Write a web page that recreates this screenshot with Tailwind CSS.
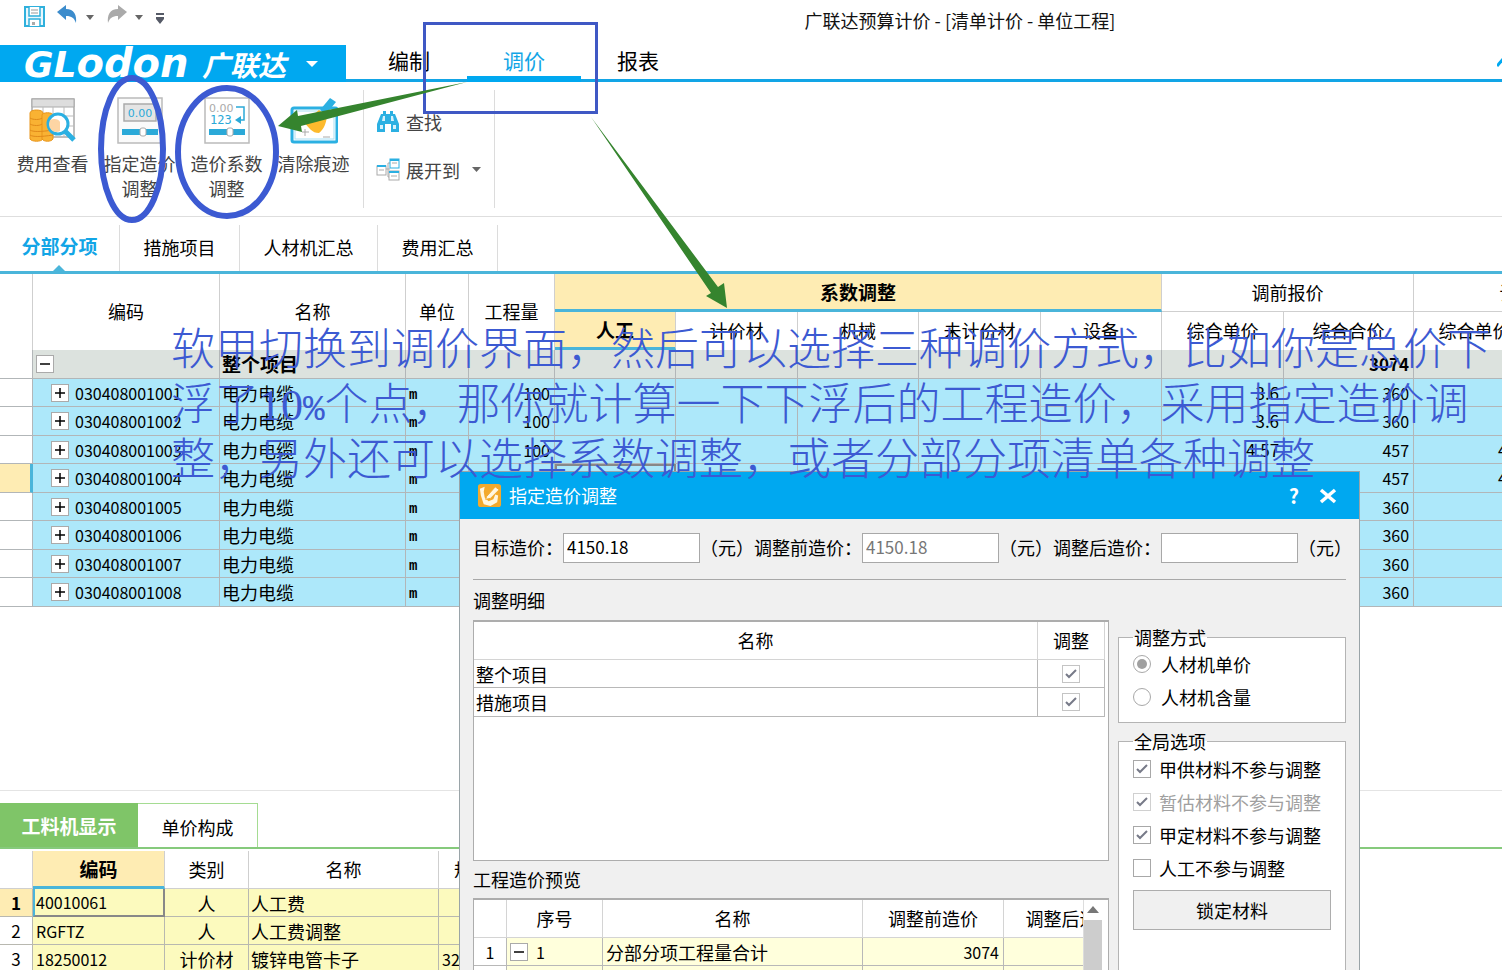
<!DOCTYPE html>
<html lang="zh-CN">
<head>
<meta charset="utf-8">
<title>广联达预算计价</title>
<script src="https://cdn.jsdelivr.net/npm/@tailwindcss/browser@4"></script>
</head>
<body class="bg-white">
<div class="relative flex h-screen w-full flex-col overflow-hidden bg-white font-['Noto_Sans_CJK_SC',sans-serif] text-[18px] leading-6 text-black">

  <!-- Title bar -->
  <header class="grid h-[45px] shrink-0 grid-cols-[1fr_auto_1fr] items-start">
    <div class="flex items-center pt-1 pl-6">
      <button aria-label="保存" class="mr-2.5"><svg class="block" width="22" height="24" viewBox="0 0 22 24"><rect x="1" y="3" width="19" height="19" fill="#e8f7fd" stroke="#2fb0dc" stroke-width="2"/><path d="M5 3v9h11V3M5 22v-7h11v7" fill="#fff" stroke="#2fb0dc" stroke-width="1.5"/><path d="M7 6h7M7 9h7" stroke="#999"/><path d="M8 18h3v3H8z" fill="#aaa"/></svg></button>
      <button aria-label="撤销"><svg class="block" width="22" height="24" viewBox="0 0 22 24"><path d="M1 8 10 1v4c8 0 11 6 10 14-2-5-4-7-10-7v4z" fill="#3c8ccc"/></svg></button>
      <button aria-label="撤销列表" class="mr-3 ml-2"><svg class="block" width="9" height="24" viewBox="0 0 9 24"><path d="M0 11h8l-4 5z" fill="#666"/></svg></button>
      <button aria-label="恢复"><svg class="block" width="22" height="24" viewBox="0 0 22 24"><path d="M20 8 11 1v4C3 5 0 11 1 19c2-5 4-7 10-7v4z" fill="#aaa"/></svg></button>
      <button aria-label="恢复列表" class="mr-3 ml-1.5"><svg class="block" width="9" height="24" viewBox="0 0 9 24"><path d="M0 11h8l-4 5z" fill="#666"/></svg></button>
      <button aria-label="自定义"><svg class="block" width="9" height="24" viewBox="0 0 9 24"><path d="M0 9h8v2H0zM0 13h8v2l-4 5-4-5z" fill="#555a66"/></svg></button>
    </div>
    <h1 class="pt-2 pl-[418px] font-normal whitespace-nowrap text-[#111]">广联达预算计价 - [清单计价 - 单位工程]</h1>
    <div></div>
  </header>

  <!-- Main tabs -->
  <nav class="flex h-[37px] shrink-0 border-b-3 border-[#12a5e6]">
    <button class="-mb-[3px] flex w-[346px] shrink-0 items-center bg-[#00a8f0] pl-6 text-white">
      <span class="flex w-[178px] items-baseline font-['DejaVu_Sans',sans-serif] text-[36px] leading-9 font-bold italic">GL<span class="text-[40px]">odon</span></span>
      <span class="text-[28px] leading-9 font-bold italic">广联达</span>
      <svg class="ml-5" width="12" height="8" viewBox="0 0 12 8"><path d="M0 1h12L6 7z" fill="#fff"/></svg>
    </button>
    <a href="#" class="ml-1.5 flex w-[114px] items-center justify-center pb-1 text-[21px]">编制</a>
    <a href="#" class="-mb-[3px] ml-px flex w-[114px] items-center justify-center border-b-6 border-[#00a8f0] pb-0.5 text-[21px] text-[#12a5e6]">调价</a>
    <a href="#" class="flex w-[114px] items-center justify-center pb-1 text-[21px]">报表</a>
    <svg class="ml-auto self-center" width="5" height="10" viewBox="0 0 5 10"><path d="M0 9 7 1" stroke="#00a8f0" stroke-width="3"/></svg>
  </nav>

  <!-- Ribbon -->
  <section class="flex h-[135px] shrink-0 border-b border-[#dedede] pl-[9px] text-[#444]">
    <button class="flex w-[87px] flex-col items-center pt-[14px]">
      <svg width="48" height="48" viewBox="0 0 48 48"><path d="M3 3h42v38H3z" fill="#fff" stroke="#aaa" stroke-width="1.5"/><path d="M3 3h42v8H3z" fill="#ddd" stroke="#aaa"/><path d="M14 11v30M24 11v30M35 11v30M3 20h42M3 30h42" stroke="#bbb"/><path d="M1 17c0-4 13-4 13 0v26c-2 3-11 3-13 0z" fill="#f9b233" stroke="#e8951b"/><path d="M13 19c0-3 11-3 11 0v24c-2 3-9 3-11 0z" fill="#f9b233" stroke="#e8951b"/><path d="M1 22c3 2 10 2 12 0M1 28c3 2 10 2 12 0M1 34c3 2 10 2 23 0M1 39c3 2 10 2 23 0" fill="none" stroke="#e08a1a"/><circle cx="29" cy="28" r="10" fill="#fff" stroke="#2bb0e2" stroke-width="3"/><path d="M21 24c4-2 9-1 10 2v9c-5 3-11-1-11-7z" fill="#fdd5a4"/><path d="m36 35 9 9" stroke="#2bb0e2" stroke-width="5"/></svg>
      <span class="mt-[7px] leading-[25px]">费用查看</span>
    </button>
    <button class="flex w-[87px] flex-col items-center pt-[14px]">
      <svg width="48" height="48" viewBox="0 0 48 48"><path d="M2 2h44v45H2z" fill="#fafafa" stroke="#bbb" stroke-width="1.5"/><path d="M8 8h32v17H8z" fill="#e4e4e4" stroke="#aaa" stroke-width="1.5"/><text x="24" y="21" text-anchor="middle" font-family="DejaVu Sans" font-size="11" fill="#2ba9d8">0.00</text><path d="M6 33h36v6H6z" fill="#2ba9d8"/><rect x="24" y="32" width="6" height="8" rx="2" fill="#fff" stroke="#aaa"/></svg>
      <span class="mt-[7px] leading-[25px] whitespace-nowrap">指定造价<br>调整</span>
    </button>
    <button class="flex w-[87px] flex-col items-center pt-[14px]">
      <svg width="48" height="48" viewBox="0 0 48 48"><path d="M2 2h44v45H2z" fill="#fff" stroke="#bbb" stroke-width="1.5"/><text x="6" y="16" font-family="DejaVu Sans" font-size="11" fill="#aaa">0.00</text><text x="7" y="28" font-family="DejaVu Sans Mono" font-size="12" fill="#2ba9d8">123</text><path d="M33 11h8v13h-5" fill="none" stroke="#2ba9d8" stroke-width="1.5"/><path d="m32 24 6-4v8z" fill="#2ba9d8"/><path d="M6 33h36v6H6z" fill="#2ba9d8"/><rect x="24" y="32" width="6" height="8" rx="2" fill="#fff" stroke="#aaa"/></svg>
      <span class="mt-[7px] leading-[25px] whitespace-nowrap">造价系数<br>调整</span>
    </button>
    <button class="flex w-[87px] flex-col items-center pt-[14px]">
      <svg width="48" height="48" viewBox="0 0 48 48"><rect x="2" y="12" width="45" height="34" rx="2" fill="#fff" stroke="#2bb0e2" stroke-width="3"/><rect x="5" y="15" width="39" height="28" fill="none" stroke="#a9e0f5"/><path d="m14 26 15-12 8 6c-1 8-3 13-8 17-7 0-10-5-15-11z" fill="#fdba2d"/><path d="m30 14 10-12 6 4-10 12z" fill="#2bb0e2"/><path d="M12 36h7M15 33v7M33 41h7" stroke="#aaa"/></svg>
      <span class="mt-[7px] leading-[25px]">清除痕迹</span>
    </button>
    <div class="my-2 ml-1.5 flex w-[132px] flex-col gap-6 border-x border-[#dcdcdc] pt-5 pl-3">
      <button class="flex items-center gap-1.5">
        <svg width="24" height="24" viewBox="0 0 24 24"><path d="M7 1h3v3h4V1h3v3h2l4 10v8h-8v-8h-6v8H1v-8L5 4h2z" fill="#2bb0e2"/><path d="M4 15h3v4H4zM17 15h3v4h-3zM7 6h2v5H6zM15 6h2l1 5h-3z" fill="#d6f1fb"/></svg>
        <span>查找</span>
      </button>
      <button class="flex items-center gap-1.5">
        <svg width="24" height="24" viewBox="0 0 24 24" fill="#fff"><path d="M10 11h4M14 5h-2v14h2" fill="none" stroke="#aaa"/><rect x="1" y="8" width="9" height="9" stroke="#aaa"/><path d="M1 8h9" stroke="#2bb0e2" stroke-width="2"/><rect x="14" y="1" width="9" height="9" stroke="#2bb0e2"/><rect x="13" y="13" width="10" height="9" stroke="#aaa"/><path d="M14 2h9M13 14h10" stroke="#2bb0e2" stroke-width="2"/><path d="M3 12h5M16 5h5M15 18h6" stroke="#aaa"/></svg>
        <span>展开到</span>
        <svg class="ml-1.5" width="9" height="6" viewBox="0 0 9 6"><path d="M0 0h9L4.5 5z" fill="#666"/></svg>
      </button>
    </div>
  </section>

  <!-- Sub tabs -->
  <nav class="flex h-[57px] shrink-0 items-stretch border-b-3 border-[#4ab5da] pt-2">
    <a href="#" class="relative flex w-[120px] items-center justify-center border-r border-[#dcdcdc] pb-1 text-[19px] font-bold text-[#12a5e6]">分部分项
      <svg class="absolute bottom-0 left-[53px]" width="12" height="6" viewBox="0 0 12 6"><path d="M6 0l6 6H0z" fill="#4ab5da"/></svg></a>
    <a href="#" class="flex w-[120px] items-center justify-center border-r border-[#dcdcdc] pb-0.5">措施项目</a>
    <a href="#" class="flex w-[138px] items-center justify-center border-r border-[#dcdcdc] pb-0.5">人材机汇总</a>
    <a href="#" class="flex w-[120px] items-center justify-center border-r border-[#dcdcdc] pb-0.5">费用汇总</a>
  </nav>

  <!-- Item grid -->
  <main class="h-[516px] shrink-0 overflow-hidden">
    <table class="w-[1658px] table-fixed border-separate border-spacing-0 [&_td]:border-r [&_td]:border-b [&_td]:border-[#b2b6b8] [&_td]:p-0 [&_th]:border-r [&_th]:border-[#cfcfcf] [&_th]:p-0 [&_th]:pb-0.5 [&_th]:font-normal">
      <colgroup><col class="w-[33px]"><col class="w-[187px]"><col class="w-[186px]"><col class="w-[63px]"><col class="w-[86px]"><col class="w-[121px]"><col class="w-[122px]"><col class="w-[121px]"><col class="w-[122px]"><col class="w-[121px]"><col class="w-[122px]"><col class="w-[130px]"><col class="w-[122px]"><col class="w-[122px]"></colgroup>
      <thead>
        <tr class="h-[38px]">
          <th rowspan="2"></th><th rowspan="2">编码</th><th rowspan="2">名称</th><th rowspan="2">单位</th><th rowspan="2">工程量</th>
          <th colspan="5" class="border-b-3 border-b-[#4ab5da]! bg-[#feecb3] pb-0! text-[19px] font-bold!">系数调整</th>
          <th colspan="2" class="border-b">调前报价</th><th colspan="2" class="border-b">调后报价</th>
        </tr>
        <tr class="h-[38px]">
          <th class="border-b-3 border-b-[#4ab5da]! bg-[#feecb3] pb-0! text-[19px] font-bold!">人工</th><th>计价材</th><th>机械</th><th>未计价材</th><th>设备</th><th>综合单价</th><th>综合合价</th><th>综合单价</th><th>综合合价</th>
        </tr>
      </thead>
      <tbody id="items"></tbody>
    </table>
  </main>

  <!-- Detail pane -->
  <section class="flex min-h-0 flex-1 flex-col border-t border-[#e4e4e4] pt-3">
    <nav class="flex h-[46px] shrink-0 border-b-2 border-[#86ca7c]">
      <a href="#" class="flex w-[138px] items-center justify-center bg-[#7fc568] pt-0.5 text-[19px] font-bold text-white">工料机显示</a>
      <a href="#" class="flex w-[120px] items-center justify-center border-t border-r border-t-[#a5dc92] border-r-[#a5dc92] pt-0.5">单价构成</a>
    </nav>
    <table class="mt-0.5 w-[560px] table-fixed border-separate border-spacing-0 [&_td]:border-r [&_td]:border-b [&_td]:border-[#b8b8b0] [&_td]:p-0 [&_th]:border-r [&_th]:border-b [&_th]:border-[#cfcfcf] [&_th]:p-0 [&_th]:pb-0.5 [&_th]:font-normal">
      <colgroup><col class="w-[33px]"><col class="w-[132px]"><col class="w-[84px]"><col class="w-[190px]"><col class="w-[121px]"></colgroup>
      <thead><tr class="h-[38px]"><th></th><th class="border-b-3! border-b-[#4ab5da]! bg-[#feecb3] pb-0! text-[19px] font-bold!">编码</th><th>类别</th><th>名称</th><th>规格及型号</th></tr></thead>
      <tbody class="bg-[#fcfabe]">
        <tr class="h-[28px]"><td class="bg-[#feecb3] text-center text-[17px] font-bold">1</td><td class="border-r-2! border-b-2! border-l-2 border-r-[#888]! border-b-[#888]! border-l-[#4ab5da]! pl-px! text-[16px]">40010061</td><td class="text-center">人</td><td class="pl-0.5!">人工费</td><td></td></tr>
        <tr class="h-[28px]"><td class="bg-white text-center text-[17px]">2</td><td class="pl-[3px]! text-[16px]">RGFTZ</td><td class="text-center">人</td><td class="pl-0.5!">人工费调整</td><td></td></tr>
        <tr class="h-[28px]"><td class="bg-white text-center text-[17px]">3</td><td class="pl-[3px]! text-[16px]">18250012</td><td class="text-center">计价材</td><td class="pl-0.5!">镀锌电管卡子</td><td class="pl-[3px]! text-[16px]">32</td></tr>
      </tbody>
    </table>
  </section>

  <!-- Dialog -->
  <div role="dialog" aria-label="指定造价调整" class="absolute top-[471px] bottom-0 left-[459px] flex w-[901px] flex-col border-x border-t border-[#9aa4a8] bg-[#f0f0f0]">
    <div class="flex h-[47px] shrink-0 items-center bg-[#00a8f0] pl-[17px] text-white">
      <svg width="25" height="25" viewBox="0 0 26 26"><rect x="1" y="1" width="24" height="24" rx="3" fill="#f3a92c"/><path d="M8 4 3 6l1 7 3 9 7 2 7-4 1-7-3-1-2 5-5 2-4-4-1-6z" fill="#fff6e0"/><path d="m10 14 9-10 4 3-9 9-5 1z" fill="#fff6e0" stroke="#f3a92c"/></svg>
      <h2 class="ml-[7px] pb-0.5">指定造价调整</h2>
      <button aria-label="帮助" class="ml-auto text-[20px] font-bold">?</button>
      <button aria-label="关闭" class="mr-[22px] ml-5"><svg class="block" width="18" height="16" viewBox="0 0 18 16"><path d="m2 2 14 12M16 2 2 14" stroke="#fff" stroke-width="3.5"/></svg></button>
    </div>
    <div class="mx-[13px] flex h-[61px] shrink-0 items-center border-b border-[#a8a8a8] pb-0.5 whitespace-nowrap">
      <label for="target" class="w-[91px] pb-0.5">目标造价：</label><input id="target" value="4150.18" class="h-[30px] w-[137px] border border-[#a8a8a8] bg-white px-[3px] pb-1 text-[17px]"><span class="w-[54px] pb-0.5">（元）</span>
      <label for="before" class="w-[108px] pb-0.5">调整前造价：</label><input id="before" value="4150.18" readonly class="h-[30px] w-[137px] border border-[#a8a8a8] bg-white px-[3px] pb-1 text-[17px] text-[#777]"><span class="w-[54px] pb-0.5">（元）</span>
      <label for="after" class="w-[108px] pb-0.5">调整后造价：</label><input id="after" readonly class="h-[30px] w-[137px] border border-[#a8a8a8] bg-white px-[3px] pb-1 text-[17px]"><span class="pb-0.5">（元）</span>
    </div>
    <div class="flex min-h-0 flex-1 px-[13px]">
      <div class="flex w-[636px] flex-col">
        <h3 class="mt-2">调整明细</h3>
        <div class="mt-2 h-[241px] shrink-0 border border-t-2 border-[#adadad] bg-white pr-[3px]">
          <table class="w-full table-fixed border-separate border-spacing-0 [&_td]:border-r [&_td]:border-b [&_td]:border-[#b8b8b8] [&_td]:p-0 [&_th]:border-r [&_th]:border-b [&_th]:border-[#d4d4d4] [&_th]:p-0 [&_th]:pb-0.5 [&_th]:font-normal">
            <colgroup><col><col class="w-[67px]"></colgroup>
            <thead><tr class="h-[38px]"><th>名称</th><th>调整</th></tr></thead>
            <tbody>
              <tr class="h-[28px]"><td class="pl-0.5!">整个项目</td><td><label class="mx-auto grid size-[18px] place-items-center [&>*]:[grid-area:1/1]"><input type="checkbox" checked aria-label="整个项目" class="size-[18px] appearance-none border border-[#c4c4c4] bg-white"><svg width="12" height="10" viewBox="0 0 12 10"><path d="m1 5 3 3 7-7" fill="none" stroke="#777a88" stroke-width="2"/></svg></label></td></tr>
              <tr class="h-[29px]"><td class="pl-0.5!">措施项目</td><td><label class="mx-auto grid size-[18px] place-items-center [&>*]:[grid-area:1/1]"><input type="checkbox" checked aria-label="措施项目" class="size-[18px] appearance-none border border-[#c4c4c4] bg-white"><svg width="12" height="10" viewBox="0 0 12 10"><path d="m1 5 3 3 7-7" fill="none" stroke="#777a88" stroke-width="2"/></svg></label></td></tr>
            </tbody>
          </table>
        </div>
        <h3 class="mt-[6px]">工程造价预览</h3>
        <div class="mt-[7px] flex min-h-0 flex-1 border-x border-t-2 border-[#adadad] bg-white pr-1.5">
          <div class="min-w-0 flex-1 overflow-hidden">
            <table class="w-[664px] table-fixed border-separate border-spacing-0 [&_td]:border-r [&_td]:border-b [&_td]:border-[#b8b8b8] [&_td]:p-0 [&_th]:border-r [&_th]:border-b [&_th]:border-[#d4d4d4] [&_th]:p-0 [&_th]:pb-0.5 [&_th]:font-normal">
              <colgroup><col class="w-[33px]"><col class="w-[96px]"><col class="w-[260px]"><col class="w-[141px]"><col class="w-[134px]"></colgroup>
              <thead><tr class="h-[38px]"><th></th><th>序号</th><th>名称</th><th>调整前造价</th><th>调整后造价</th></tr></thead>
              <tbody class="bg-[#ffffdc]">
                <tr class="h-[28px]"><td class="bg-white text-center text-[16px]">1</td><td><div class="flex items-center gap-2 pl-[3px] text-[16px]"><button aria-label="折叠" class="grid size-[18px] place-items-center border border-[#aaa] bg-white"><svg width="12" height="12" viewBox="0 0 12 12"><path d="M1 6h10" stroke="#000" stroke-width="1.5"/></svg></button>1</div></td><td class="pl-[3px]!">分部分项工程量合计</td><td class="pr-1! text-right text-[16px]">3074</td><td></td></tr>
                <tr class="h-[28px]"><td class="bg-white"></td><td></td><td></td><td></td><td></td></tr>
              </tbody>
            </table>
          </div>
          <div class="flex w-[19px] flex-col border-l border-[#ddd] bg-[#cdcdcd]"><button aria-label="向上滚动" class="grid h-5 place-items-center bg-white"><svg width="12" height="8" viewBox="0 0 12 8"><path d="M0 7h12L6 0z" fill="#777"/></svg></button></div>
        </div>
      </div>
      <div class="ml-[9px] flex flex-1 flex-col pt-[45px]">
        <fieldset class="h-[98px] shrink-0 border border-[#b4b4b4] bg-white px-[14px]">
          <legend class="px-px leading-6">调整方式</legend>
          <label class="-mt-0.5 flex h-[33px] items-center gap-2.5"><span class="grid place-items-center [&>*]:[grid-area:1/1]"><input type="radio" name="mode" checked class="size-[18px] appearance-none rounded-full border border-[#a8a8a8] bg-white"><span class="size-2.5 rounded-full bg-[#a0a0a0]"></span></span>人材机单价</label>
          <label class="flex h-[33px] items-center gap-2.5"><input type="radio" name="mode" class="size-[18px] appearance-none rounded-full border border-[#a8a8a8] bg-white">人材机含量</label>
        </fieldset>
        <fieldset class="mt-1.5 min-h-0 flex-1 border border-b-0 border-[#b4b4b4] bg-white px-[14px]">
          <legend class="px-px leading-6">全局选项</legend>
          <label class="-mt-px flex h-[33px] items-center gap-2 whitespace-nowrap"><span class="grid place-items-center [&>*]:[grid-area:1/1]"><input type="checkbox" checked class="size-[18px] appearance-none border border-[#a8a8a8] bg-white"><svg width="12" height="10" viewBox="0 0 12 10"><path d="m1 5 3 3 7-7" fill="none" stroke="#777a88" stroke-width="2"/></svg></span>甲供材料不参与调整</label>
          <label class="flex h-[33px] items-center gap-2 whitespace-nowrap text-[#a0a0a0]"><span class="grid place-items-center [&>*]:[grid-area:1/1]"><input type="checkbox" checked disabled class="size-[18px] appearance-none border border-[#d0d0d0] bg-white"><svg width="12" height="10" viewBox="0 0 12 10"><path d="m1 5 3 3 7-7" fill="none" stroke="#777a88" stroke-width="2"/></svg></span>暂估材料不参与调整</label>
          <label class="flex h-[33px] items-center gap-2 whitespace-nowrap"><span class="grid place-items-center [&>*]:[grid-area:1/1]"><input type="checkbox" checked class="size-[18px] appearance-none border border-[#a8a8a8] bg-white"><svg width="12" height="10" viewBox="0 0 12 10"><path d="m1 5 3 3 7-7" fill="none" stroke="#777a88" stroke-width="2"/></svg></span>甲定材料不参与调整</label>
          <label class="flex h-[33px] items-center gap-2 whitespace-nowrap"><input type="checkbox" class="size-[18px] appearance-none border border-[#a8a8a8] bg-white">人工不参与调整</label>
          <button class="mt-1.5 h-10 w-full border border-[#adadad] bg-[#f0f0f0]">锁定材料</button>
        </fieldset>
      </div>
    </div>
  </div>

  <!-- Annotations drawn over the window -->
  <svg class="pointer-events-none absolute top-0 left-0" width="740" height="320" viewBox="0 0 740 320" fill="none">
    <rect x="424.5" y="23.5" width="172" height="89" stroke="#3f58c4" stroke-width="3"/>
    <ellipse cx="132" cy="149" rx="31" ry="71" stroke="#3c5ad2" stroke-width="6"/>
    <ellipse cx="227" cy="152" rx="49" ry="64" stroke="#3c5ad2" stroke-width="6"/>
    <path d="m467 82-169 34-1-6-19 16 24 6-1-6z" fill="#35842e"/>
    <path d="m591 117 127 170 6-4 3 25-21-12 5-3z" fill="#35842e"/>
  </svg>
  <p class="pointer-events-none absolute top-[319px] left-[171px] text-[44px] leading-[55px] font-light whitespace-nowrap text-[#3c5ad2]">软甲切换到调价界面，然后可以选择三种调价方式，比如你是总价下<br>浮了<span class="font-['Liberation_Serif',serif] leading-none font-normal">10</span><span class="font-['Liberation_Mono',monospace] text-[36px] leading-none font-normal">%</span>个点，那你就计算一下下浮后的工程造价，采用指定造价调<br>整，另外还可以选择系数调整，或者分部分项清单各种调整</p>
</div>

<script>
  const items = [
    ['030408001001', '100', '3.6', '360', ''],
    ['030408001002', '100', '3.6', '360', ''],
    ['030408001003', '100', '4.57', '457', '4.57'],
    ['030408001004', '100', '4.57', '457', '4.57'],
    ['030408001005', '100', '3.6', '360', ''],
    ['030408001006', '100', '3.6', '360', ''],
    ['030408001007', '100', '3.6', '360', ''],
    ['030408001008', '100', '3.6', '360', '']
  ];
  const box = (plus) => `<button aria-label="${plus ? '展开' : '折叠'}" class="grid size-[18px] place-items-center border border-[#aaa] bg-white"><svg width="12" height="12" viewBox="0 0 12 12"><path d="M1 6h10${plus ? 'M6 1v10' : ''}" stroke="#000" stroke-width="1.5"/></svg></button>`;
  let html = `<tr class="h-[29px] bg-[#dce2de]"><td class="bg-white"></td><td><div class="pl-[3px]">${box(false)}</div></td><td class="pl-0.5! text-[19px] font-bold">整个项目</td><td></td><td></td><td></td><td></td><td></td><td></td><td></td><td></td><td class="pr-1! text-right text-[17px] font-bold">3074</td><td></td><td></td></tr>`;
  items.forEach((r, i) => {
    const sel = i === 3;
    html += `<tr class="${i % 2 ? 'h-[29px]' : 'h-[28px]'} bg-[#ade8fa]"><td class="${sel ? 'border-r-3! border-r-[#4ab5da]! bg-[#feecb3]' : 'bg-white'}"></td>
      <td><div class="flex items-center gap-1.5 pl-[18px] text-[16px]">${box(true)}${r[0]}</div></td><td class="pl-0.5!">电力电缆</td>
      <td class="pl-[3px]! pt-1! font-['Liberation_Mono',monospace] text-[14px] leading-5 font-bold">m</td><td class="pr-1! text-right text-[16px]">${r[1]}</td>
      <td class="${sel ? 'border-2! border-[#888]!' : ''}"></td><td></td><td></td><td></td><td></td>
      <td class="pr-1! text-right text-[17px]">${r[2]}</td><td class="pr-1! text-right text-[16px]">${r[3]}</td><td class="pr-1! text-right text-[17px]">${r[4]}</td><td></td></tr>`;
  });
  document.getElementById('items').innerHTML = html;
</script>
</body>
</html>
